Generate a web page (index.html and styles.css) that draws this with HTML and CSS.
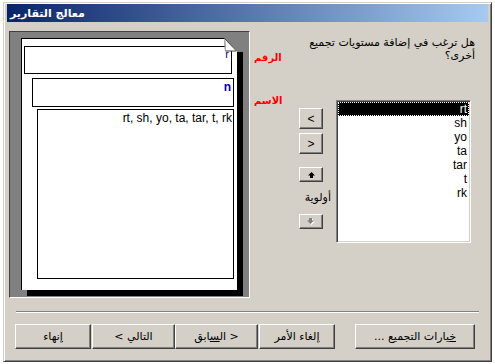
FILE: index.html
```html
<!DOCTYPE html>
<html lang="ar">
<head>
    <meta charset="UTF-8">
    <meta name="viewport" content="width=device-width, initial-scale=1.0">
    <title>معالج التقارير</title>
    <link rel="stylesheet" href="styles.css">
</head>
<body dir="ltr">
    <div class="window">
        <div class="titlebar">
            <span class="title" dir="rtl">معالج التقارير</span>
        </div>

        <div class="main">
            <!-- report layout preview -->
            <div class="preview">
                <div class="page">
                    <div class="box box-num"><span class="field-num">r</span></div>
                    <div class="box box-name"><span class="field-name">n</span></div>
                    <div class="box box-detail">rt, sh, yo, ta, tar, t, rk</div>
                    <svg class="fold" width="20" height="15" viewBox="0 0 20 15">
                        <polygon points="1,0 20,0 20,14 14,14 14,13" fill="#808080"/>
                        <rect x="14" y="14" width="6" height="1" fill="#000"/>
                        <polygon points="1.5,0.5 2.5,13 13.5,13" fill="#fff" stroke="#404040" stroke-width="1"/>
                        <line x1="1.5" y1="1" x2="2.5" y2="12.5" stroke="#c0c0c0" stroke-width="1"/>
                    </svg>
                </div>
            </div>

            <div class="labels">
                <div class="lbl lbl-num" dir="rtl">الرقم</div>
                <div class="lbl lbl-name" dir="rtl">الاسم</div>
            </div>

            <div class="side">
                <p class="question" dir="rtl">هل ترغب في إضافة مستويات تجميع<br>أخرى؟</p>
                <div class="picker">
                    <div class="arrows">
                        <button class="btn nav-btn nav-first"><span class="arw">&lt;</span></button>
                        <button class="btn nav-btn nav-second"><span class="arw">&gt;</span></button>
                        <button class="btn prio-btn prio-up">
                            <svg width="7" height="6" viewBox="0 0 7 6">
                                <polygon points="3.5,0 7,3.5 5,3.5 5,6 2,6 2,3.5 0,3.5" fill="#000"/>
                            </svg>
                        </button>
                        <div class="priority" dir="rtl">أولوية</div>
                        <button class="btn prio-btn" disabled>
                            <svg width="8" height="7" viewBox="0 0 8 7">
                                <polygon points="4.5,7 8,3.5 6,3.5 6,1 3,1 3,3.5 1,3.5" fill="#fff"/>
                                <polygon points="3.5,6 7,2.5 5,2.5 5,0 2,0 2,2.5 0,2.5" fill="#808080"/>
                            </svg>
                        </button>
                    </div>
                    <ul class="listbox">
                        <li class="selected">rt</li>
                        <li>sh</li>
                        <li>yo</li>
                        <li>ta</li>
                        <li>tar</li>
                        <li>t</li>
                        <li>rk</li>
                    </ul>
                </div>
            </div>
        </div>

        <div class="separator"></div>

        <div class="footer">
            <button class="btn foot-btn btn-finish" dir="rtl"><u>إ</u>نهاء</button>
            <button class="btn foot-btn btn-next" dir="rtl">التالي &gt;</button>
            <button class="btn foot-btn btn-back" dir="rtl">&lt; ال<u>س</u>ابق</button>
            <button class="btn foot-btn btn-cancel" dir="rtl"><u>إ</u>لغاء الأمر</button>
            <button class="btn foot-btn btn-options" dir="rtl"><u>خ</u>يارات التجميع ...</button>
        </div>
    </div>
</body>
</html>
```

FILE: styles.css
```css
* {
    margin: 0;
    padding: 0;
    box-sizing: border-box;
}

body {
    background: #fff;
    font-family: "DejaVu Sans", sans-serif;
    font-size: 11px;
    color: #000;
}

.window {
    width: 489px;
    height: 360px;
    margin: 2px 0 0 3px;
    padding: 1px 3px 2px 3px;
    background: #d4d0c8;
    border: 1px solid;
    border-color: #d4d0c8 #404040 #404040 #d4d0c8;
    box-shadow: inset 1px 1px #fff, inset -1px -1px #808080;
    overflow: hidden;
}

.titlebar {
    height: 18px;
    background: linear-gradient(90deg, #0a246a 0%, #a6caf0 100%);
    display: flex;
    align-items: center;
    padding-left: 3px;
}

.title {
    color: #fff;
    font-weight: bold;
    font-size: 11px;
}

.main {
    display: flex;
    margin-top: 9px;
    height: 267px;
}

/* preview */
.preview {
    width: 241px;
    height: 267px;
    margin-left: 2px;
    background: #808080;
    border: 1px solid;
    border-color: #404040 #fff #fff #404040;
    padding: 6px 0 0 11px;
}

.page {
    position: relative;
    width: 216px;
    height: 252px;
    background: #fff;
    border-left: 1px solid #000;
    border-top: 1px solid #000;
    box-shadow: 6px 6px 0 #000;
    padding: 7px 0 0 2px;
}

.box {
    border: 1px solid #000;
    background: #fff;
    text-align: right;
    font-family: "Liberation Sans", sans-serif;
    font-size: 12px;
    line-height: 14px;
    color: #000;
}

.box-num {
    width: 208px;
    height: 28px;
    padding: 0 2px 0 0;
}

.field-num {
    color: #000080;
    font-size: 11px;
}

.box-name {
    width: 202px;
    height: 29px;
    margin: 4px 0 0 8px;
    padding: 1px 2px 0 0;
}

.field-name {
    color: #0000c0;
    font-weight: bold;
}

.box-detail {
    width: 197px;
    height: 170px;
    margin: 2px 0 0 13px;
    padding: 1px 1px 0 0;
}

.fold {
    position: absolute;
    top: -1px;
    right: -6px;
    display: block;
}

/* labels */
.labels {
    width: 46px;
    padding-left: 4px;
}

.lbl {
    color: #ff0000;
    font-weight: bold;
    font-size: 10px;
    line-height: 14px;
    text-align: left;
}

.lbl-num {
    margin-top: 20px;
}

.lbl-name {
    margin-top: 29px;
}

/* right side */
.side {
    flex: 1;
    padding-right: 13px;
}

.question {
    margin-top: 5px;
    line-height: 13px;
    text-align: right;
}

.picker {
    display: flex;
    margin-top: 38px;
}

.arrows {
    width: 40px;
    padding-left: 3px;
    display: flex;
    flex-direction: column;
}

.btn {
    background: #d4d0c8;
    border: 1px solid;
    border-color: #fff #404040 #404040 #fff;
    box-shadow: inset -1px -1px #808080;
    font-family: "DejaVu Sans", sans-serif;
    font-size: 11px;
    color: #000;
}

.arw {
    font-family: "Liberation Sans", sans-serif;
    font-size: 12px;
}

.nav-btn,
.prio-btn {
    display: flex;
    align-items: center;
    justify-content: center;
}

.nav-btn {
    width: 24px;
    height: 21px;
}

.nav-first {
    margin-top: 8px;
}

.nav-second {
    margin-top: 4px;
}

.prio-btn {
    width: 24px;
    height: 15px;
}

.prio-up {
    margin-top: 13px;
}

.priority {
    height: 32px;
    line-height: 32px;
    text-align: right;
    padding-right: 5px;
}

.listbox {
    list-style: none;
    width: 135px;
    height: 143px;
    background: #fff;
    border: 1px solid;
    border-color: #808080 #fff #fff #808080;
    box-shadow: inset 1px 1px #404040, inset -1px -1px #d4d0c8;
    padding: 1px;
    font-family: "Liberation Sans", sans-serif;
    font-size: 12px;
    color: #000;
}

.listbox li {
    height: 14px;
    line-height: 14px;
    text-align: right;
    padding-right: 2px;
}

.listbox li.selected {
    background: #000;
    color: #fff;
    outline: 1px dotted #fff;
    outline-offset: -1px;
}

/* bottom */
.separator {
    width: 463px;
    height: 2px;
    margin: 13px 0 0 9px;
    border-top: 1px solid #808080;
    border-bottom: 1px solid #fff;
}

.footer {
    display: flex;
    margin-top: 11px;
    padding-left: 8px;
}

.foot-btn {
    height: 25px;
    line-height: 21px;
    text-align: center;
}

.btn-finish {
    width: 76px;
}

.btn-next {
    width: 83px;
    margin-left: 1px;
}

.btn-back {
    width: 83px;
}

.btn-cancel {
    width: 76px;
    margin-left: 1px;
}

.btn-options {
    width: 120px;
    margin-left: 20px;
}
```
